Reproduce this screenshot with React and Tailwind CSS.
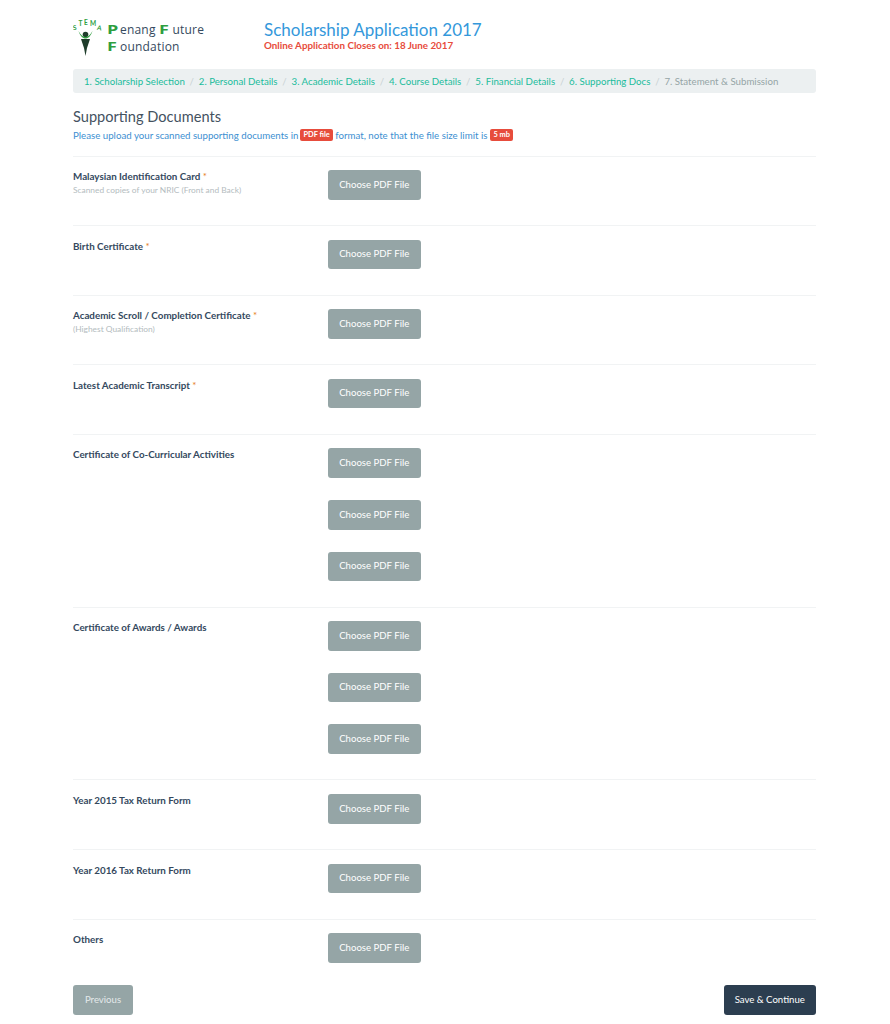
import React from 'react';

const steps = [
  '1. Scholarship Selection',
  '2. Personal Details',
  '3. Academic Details',
  '4. Course Details',
  '5. Financial Details',
  '6. Supporting Docs',
];

const rows = [
  { label: 'Malaysian Identification Card', required: true, hint: 'Scanned copies of your NRIC (Front and Back)', count: 1 },
  { label: 'Birth Certificate', required: true, count: 1 },
  { label: 'Academic Scroll / Completion Certificate', required: true, hint: '(Highest Qualification)', count: 1 },
  { label: 'Latest Academic Transcript', required: true, count: 1 },
  { label: 'Certificate of Co-Curricular Activities', count: 3 },
  { label: 'Certificate of Awards / Awards', count: 3 },
  { label: 'Year 2015 Tax Return Form', count: 1 },
  { label: 'Year 2016 Tax Return Form', count: 1 },
  { label: 'Others', count: 1 },
];

const Logo = () => (
  <div className="flex items-start w-[191px] shrink-0 h-[42px]">
    <svg className="w-[30px] h-[42px] shrink-0" viewBox="0 0 30 42">
      <g fill="#2e9e3f" fontSize="6.5" fontWeight="700" fontFamily="Lato, sans-serif">
        <text x="0" y="15" transform="rotate(-8 2 14)">S</text>
        <text x="5.5" y="11">T</text>
        <text x="11" y="10">E</text>
        <text x="17" y="11">M</text>
        <text x="24" y="15" transform="rotate(10 26 14)">A</text>
      </g>
      <circle cx="12.5" cy="19.5" r="2.8" fill="#1f3d2b" />
      <path d="M5.5 16 C7 21 10 23.5 12.5 23.5 C15 23.5 18 21 19.5 16 C18 19 15 22 12.5 22 C10 22 7 19 5.5 16Z" fill="#2e9e3f" />
      <path d="M8 24 L17 24 L14 33 L12.5 41 L11 33 Z" fill="#1f3d2b" />
    </svg>
    <div className="ml-[3.5px] pt-[6px] text-[12px] leading-[17px] text-[#34495e] font-['Open_Sans',sans-serif] tracking-[0.2px] whitespace-nowrap">
      <div>
        <span className="inline-block w-[13.5px] text-[#2e9e3f] font-bold origin-left scale-x-[1.5]">P</span>enang{' '}
        <span className="inline-block w-[13.5px] text-[#2e9e3f] font-bold origin-left scale-x-[1.5]">F</span>uture
      </div>
      <div>
        <span className="inline-block w-[13.5px] text-[#2e9e3f] font-bold origin-left scale-x-[1.5]">F</span>oundation
      </div>
    </div>
  </div>
);

const UploadButton = () => (
  <button className="block h-[29.6px] w-[92.5px] mb-[22px] rounded-[3px] bg-[#95a5a6] text-white text-[9.6px]">
    Choose PDF File
  </button>
);

const Row = ({ label, required, hint, count }) => (
  <div className="flex border-t border-[#f1f3f4] pt-[13.6px] pb-[3.4px]">
    <div className="w-[255px] shrink-0">
      <div className="text-[9.8px] leading-[13px] font-bold text-[#34495e]">
        {label}
        {required && <span className="text-[#e67e22] font-normal"> *</span>}
      </div>
      {hint && <div className="text-[8.4px] leading-[12px] mt-[1px] text-[#b4bcc0]">{hint}</div>}
    </div>
    <div>
      {Array.from({ length: count }).map((_, i) => (
        <UploadButton key={i} />
      ))}
    </div>
  </div>
);

export default function App() {
  return (
    <div className="min-h-screen bg-white font-['Lato',sans-serif]">
      <div className="w-[743px] ml-[73px]">
        {/* Header */}
        <div className="flex h-[69px] pt-[15px]">
          <Logo />
          <div>
            <h1 className="text-[17px] leading-[22px] -mt-[1px] pt-[5px] text-[#3498db]">Scholarship Application 2017</h1>
            <div className="text-[9.8px] leading-[13px] -mt-[2px] font-bold text-[#e74c3c]">Online Application Closes on: 18 June 2017</div>
          </div>
        </div>

        {/* Steps */}
        <div className="flex items-center h-[24px] px-[11px] rounded-[3px] bg-[#ecf0f1] text-[9.7px] whitespace-nowrap">
          {steps.map((s) => (
            <React.Fragment key={s}>
              <span className="text-[#1abc9c]">{s}</span>
              <span className="text-[#c8d0d3] w-[14px] text-center">/</span>
            </React.Fragment>
          ))}
          <span className="text-[#95a5a6]">7. Statement &amp; Submission</span>
        </div>

        {/* Title */}
        <h2 className="mt-[14px] text-[14.6px] leading-[20px] text-[#44525f]">Supporting Documents</h2>
        <p className="mt-[1px] mb-[13.5px] h-[14px] flex items-center whitespace-pre text-[9.7px] text-[#3d8fd1]">
          Please upload your scanned supporting documents in{' '}
          <span className="-ml-[1px] mr-[2px] px-[3.5px] h-[12px] leading-[12px] rounded-[2px] bg-[#e74c3c] text-white text-[7.4px] font-bold">PDF file</span>
          {' '}format, note that the file size limit is{' '}
          <span className="px-[3.5px] h-[12px] leading-[12px] rounded-[2px] bg-[#e74c3c] text-white text-[7.4px] font-bold">5 mb</span>
        </p>

        {/* Documents */}
        {rows.map((r) => (
          <Row key={r.label} {...r} />
        ))}

        {/* Footer buttons */}
        <div className="flex justify-between -mt-[3px]">
          <button className="h-[29.6px] w-[60px] rounded-[3px] bg-[#95a5a6] text-[#e4e9ea] text-[9.6px]">Previous</button>
          <button className="h-[29.6px] w-[92.5px] rounded-[3px] bg-[#2c3e50] text-white text-[9.6px]">Save &amp; Continue</button>
        </div>
      </div>
    </div>
  );
}
